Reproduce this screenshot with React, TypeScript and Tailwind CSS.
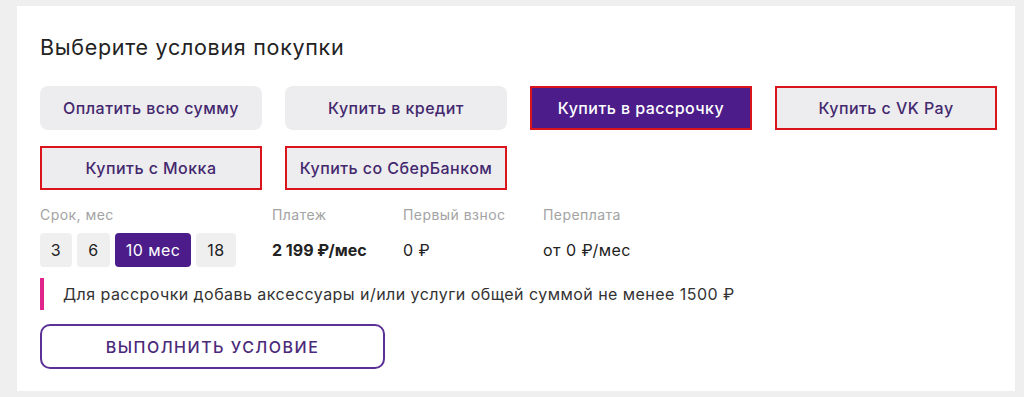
const purchaseOptions = [
	{ label: 'Оплатить всю сумму', kind: 'plain' },
	{ label: 'Купить в кредит', kind: 'plain' },
	{ label: 'Купить в рассрочку', kind: 'active' },
	{ label: 'Купить с VK Pay', kind: 'marked' },
	{ label: 'Купить с Мокка', kind: 'marked' },
	{ label: 'Купить со СберБанком', kind: 'marked' },
] as const;

const terms = [
	{ label: '3', active: false, w: 'w-[32px]' },
	{ label: '6', active: false, w: 'w-[33px]' },
	{ label: '10 мес', active: true, w: 'w-[76px]' },
	{ label: '18', active: false, w: 'w-[40px]' },
];

function OptionButton({ label, kind }: { label: string; kind: 'plain' | 'active' | 'marked' }) {
	const base = 'flex h-[44px] w-[222px] items-center justify-center text-[16px] font-medium tracking-[0.45px]';
	if (kind === 'active') {
		return (
			<button type="button" className={`${base} border-2 border-[#d9141c] bg-[#4b1c8a] text-white`}>
				{label}
			</button>
		);
	}
	if (kind === 'marked') {
		return (
			<button type="button" className={`${base} border-2 border-[#d9141c] bg-[#ededef] text-[#44286e]`}>
				{label}
			</button>
		);
	}
	return (
		<button type="button" className={`${base} rounded-[8px] bg-[#ededef] text-[#44286e]`}>
			{label}
		</button>
	);
}

export default function App() {
	return (
		<div className="h-[397px] w-[1024px] bg-[#efeff0] pl-[17px] pr-[9px] pt-[6px] font-['Inter',sans-serif] tracking-[0.45px]">
			<div className="h-[385px] w-[998px] bg-white pl-[23px] pt-[27px]">
				<h2 className="text-[21.5px] leading-[28px] tracking-[0.7px] text-[#222]">Выберите условия покупки</h2>

				<div className="mt-[25px] flex w-[960px] flex-wrap gap-x-[23px] gap-y-[16px]">
					{purchaseOptions.map((o) => (
						<OptionButton key={o.label} label={o.label} kind={o.kind} />
					))}
				</div>

				<div className="mt-[15px] flex text-[14px]">
					<div className="w-[232px]">
						<div className="leading-[20px] text-[#a3a3a3]">Срок, мес</div>
						<div className="mt-[8px] flex gap-[5px]">
							{terms.map((t) => (
								<button
									key={t.label}
									type="button"
									className={`${t.w} flex h-[34px] items-center justify-center rounded-[4px] text-[16px] ${
										t.active ? 'bg-[#4b1c8a] text-white' : 'bg-[#efeff0] text-[#222]'
									}`}
								>
									{t.label}
								</button>
							))}
						</div>
					</div>
					<div className="w-[131px]">
						<div className="leading-[20px] text-[#a3a3a3]">Платеж</div>
						<div className="mt-[8px] flex h-[34px] items-center text-[16px] font-bold tracking-normal text-[#222]">2 199 ₽/мес</div>
					</div>
					<div className="w-[140px]">
						<div className="leading-[20px] text-[#a3a3a3]">Первый взнос</div>
						<div className="mt-[8px] flex h-[34px] items-center text-[16px] text-[#222]">0 ₽</div>
					</div>
					<div>
						<div className="leading-[20px] text-[#a3a3a3]">Переплата</div>
						<div className="mt-[8px] flex h-[34px] items-center text-[16px] text-[#222]">от 0 ₽/мес</div>
					</div>
				</div>

				<div className="mt-[11px] flex h-[32px] items-center">
					<div className="h-full w-[4px] bg-[#e0268c]" />
					<p className="ml-[19px] text-[16px] text-[#333]">
						Для рассрочки добавь аксессуары и/или услуги общей суммой не менее 1500 ₽
					</p>
				</div>

				<button
					type="button"
					className="mt-[14px] flex h-[45px] w-[345px] items-center justify-center rounded-[10px] border-2 border-[#5b3196] text-[16px] font-medium uppercase tracking-[1.5px] text-[#4b2a7a]"
				>
					Выполнить условие
				</button>
			</div>
		</div>
	);
}
